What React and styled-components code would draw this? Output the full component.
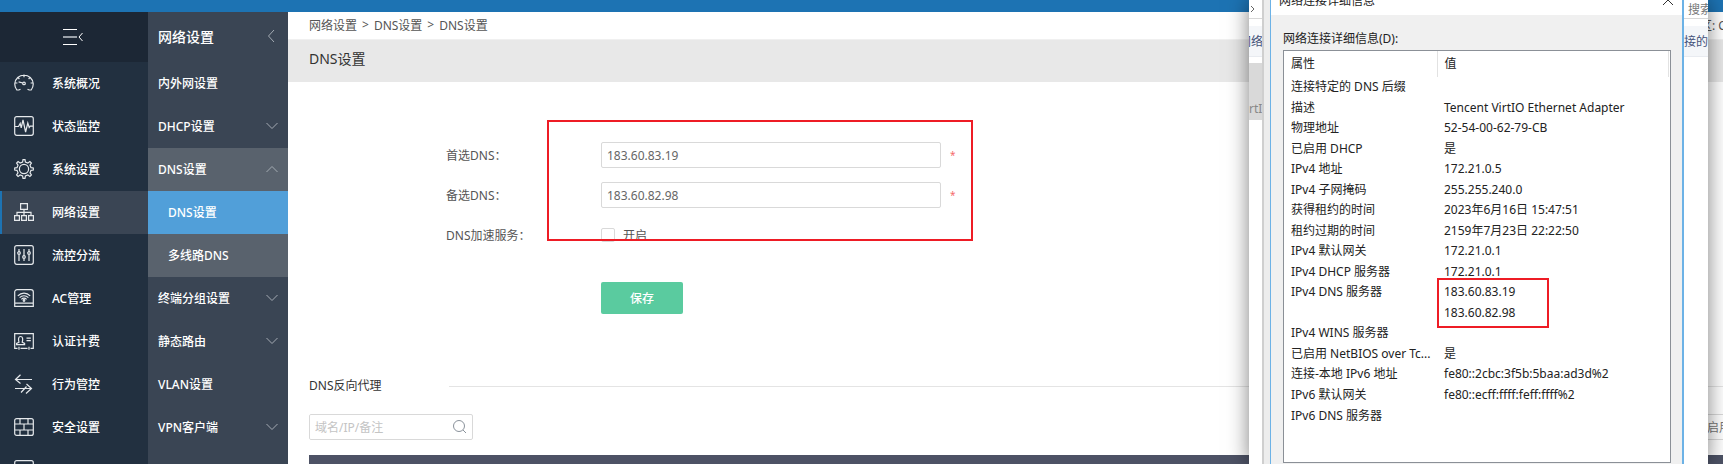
import React from "react";
import styled, { createGlobalStyle, css } from "styled-components";

const Global = createGlobalStyle`
  *, *::before, *::after { box-sizing: border-box; }
  body { margin: 0; background: #fff; overflow: hidden; }
  body, button, input { font-family: "Noto Sans", "Noto Sans CJK SC", sans-serif; font-size: 12px; }
`;

const Page = styled.div`
  position: relative;
  display: flex;
  flex-direction: column;
  height: 100vh;
  overflow: hidden;
  color: #555;
`;
const TopBar = styled.header`
  flex: none;
  height: 12px;
  background: #1d73b3;
`;
const Body = styled.div`
  flex: 1;
  display: flex;
  min-height: 0;
`;

/* Primary navigation */
const Sidebar = styled.nav`
  flex: none;
  width: 148px;
  overflow: hidden;
  background: #223040;
`;
const Collapse = styled.button`
  display: flex;
  align-items: center;
  justify-content: center;
  width: 100%;
  height: 50px;
  padding: 0 2px 0 0;
  border: 0;
  background: #1c2735;
`;
const NavItem = styled.a`
  display: flex;
  align-items: center;
  gap: 18px;
  height: 43px;
  padding: 0 0 2px 12px;
  border-left: 2px solid ${(p) => (p.$active ? "#1d73b3" : "transparent")};
  background: ${(p) => (p.$active ? "#3a4554" : "transparent")};
  color: #fff;
  font-weight: 500;
  text-decoration: none;
`;
const Icon = styled.svg`
  flex: none;
  width: 20px;
  height: 20px;
  fill: none;
  stroke: #e6e9ec;
  stroke-width: 1.2;
`;

/* Secondary navigation */
const SubNav = styled.nav`
  flex: none;
  width: 140px;
  overflow: hidden;
  background: #3a4554;
`;
const SubHeader = styled.div`
  display: flex;
  align-items: center;
  justify-content: space-between;
  height: 50px;
  padding: 0 13px 2px 10px;
  color: #fff;
  font-size: 14px;
  font-weight: 500;
`;
const SubItem = styled.a`
  display: flex;
  align-items: center;
  justify-content: space-between;
  height: 43px;
  padding: 0 10px 2px;
  color: #fff;
  font-weight: 500;
  text-decoration: none;
  ${(p) => p.$open && css`background: #59626d;`}
  ${(p) => p.$child && css`padding-left: 20px; background: #59626d;`}
  ${(p) => p.$active && css`background: #519fd9;`}
`;
const Chevron = styled.svg`
  flex: none;
  fill: none;
  stroke: #a4abb3;
`;

/* Content */
const Main = styled.main`
  flex: 1;
  min-width: 0;
  overflow: hidden;
`;
const Crumbs = styled.div`
  display: flex;
  align-items: center;
  justify-content: space-between;
  height: 28px;
  padding: 0 0 1px 21px;
  border-bottom: 1px solid #f0f0f0;
`;
const Trail = styled.nav`
  display: flex;
  gap: 5px;
  a { color: #555; text-decoration: none; }
`;
const Region = styled.div`
  width: 23px;
  overflow: hidden;
  white-space: nowrap;
`;
const Title = styled.h1`
  margin: 0;
  height: 42px;
  padding-left: 21px;
  background: #e8e8e8;
  color: #333;
  font-size: 14px;
  font-weight: 400;
  line-height: 38px;
`;
const Form = styled.form`
  position: relative;
  display: grid;
  gap: 14px;
  padding: 60px 0 0 158px;
`;
const Field = styled.div`
  display: grid;
  grid-template-columns: 155px 340px 1fr;
  align-items: center;
  height: 26px;
`;
const TextInput = styled.input`
  width: 100%;
  height: 26px;
  padding: 0 5px;
  border: 1px solid #d9d9d9;
  border-radius: 2px;
  background: #fff;
  color: #666;
  outline: 0;
  &::placeholder { color: #c4c4c4; opacity: 1; }
`;
const Required = styled.span`
  padding-left: 9px;
  color: #f56c6c;
  font-size: 10px;
`;
const CheckLabel = styled.label`
  display: flex;
  align-items: center;
  gap: 8px;
`;
const CheckBox = styled.input`
  appearance: none;
  width: 14px;
  height: 14px;
  margin: 0;
  border: 1px solid #d9d9d9;
  border-radius: 2px;
  background: #fff;
`;
const Save = styled.button`
  width: 82px;
  height: 32px;
  margin: 20px 0 0 155px;
  border: 0;
  border-radius: 2px;
  background: #5acb9f;
  color: #fff;
  font-weight: 500;
`;
const Highlight = styled.div`
  position: absolute;
  z-index: 2;
  border: 2px solid #ee1c25;
  pointer-events: none;
`;
const FormHighlight = styled(Highlight)`
  top: 38px;
  left: 259px;
  width: 426px;
  height: 121px;
`;
const SectionHead = styled.div`
  display: grid;
  grid-template-columns: 140px 1fr;
  align-items: center;
  margin-top: 62px;
  padding-left: 21px;
  &::after { content: ""; height: 1px; background: #e4e4e4; }
`;
const SectionTitle = styled.h2`
  margin: 0;
  color: #333;
  font-size: 12px;
  font-weight: 400;
  line-height: 20px;
`;
const Tools = styled.div`
  display: flex;
  justify-content: space-between;
  margin-top: 18px;
  padding-left: 21px;
`;
const Search = styled.label`
  display: flex;
  align-items: center;
  width: 164px;
  height: 26px;
  padding-right: 6px;
  border: 1px solid #d9d9d9;
  border-radius: 2px;
  ${TextInput} { height: 24px; border: 0; min-width: 0; }
`;
const ToolButton = styled.button`
  width: 28px;
  height: 26px;
  padding: 0 0 0 11px;
  overflow: hidden;
  border: 1px solid #d9d9d9;
  border-right: 0;
  background: #fff;
  color: #777;
  text-align: left;
  white-space: nowrap;
`;
const TableHead = styled.div`
  height: 42px;
  margin: 15px 0 0 21px;
  background: #4d5265;
`;

/* Desktop windows over the page */
const BackWindow = styled.section`
  position: absolute;
  z-index: 3;
  top: 0;
  right: 15px;
  bottom: 0;
  width: 459px;
  background: #fff;
  box-shadow: 0 0 20px rgba(0, 0, 0, 0.5);
`;
const BackRow = styled.div`
  display: flex;
  align-items: center;
  justify-content: space-between;
`;
const AddressRow = styled(BackRow)`
  height: 19px;
  padding-left: 1px;
  border-bottom: 1px solid #d8d8d8;
  color: #777;
`;
const CommandRow = styled(BackRow)`
  height: 31px;
  margin-top: 7px;
  border-bottom: 1px solid #e8ebf0;
  background: #f4f6f9;
  color: #44527a;
`;
const AdapterRow = styled(BackRow)`
  height: 57px;
  width: 13px;
  margin-top: 6px;
  padding-top: 34px;
  background: #d9d9d9;
  color: #888;
`;
const Clip = styled.span`
  display: flex;
  justify-content: ${(p) => (p.$end ? "flex-end" : "flex-start")};
  width: ${(p) => p.$width};
  overflow: hidden;
  white-space: nowrap;
`;
const Dialog = styled.section`
  position: absolute;
  z-index: 1;
  top: -15px;
  right: 24px;
  bottom: -30px;
  width: 414px;
  border: solid #6cb2e6;
  border-width: 1px 2px 1px 1px;
  background: #f0f0f0;
  color: #222;
`;
const Gutter = styled.div`
  position: absolute;
  top: 0;
  bottom: 0;
  left: 13px;
  width: 8px;
  border-left: 2px solid #cfcfcf;
  background: #ededed;
`;
const DialogTitle = styled.header`
  display: flex;
  align-items: center;
  justify-content: space-between;
  height: 29px;
  padding: 0 8px 2px;
  background: #fff;
`;
const CloseButton = styled.button`
  display: flex;
  padding: 0;
  border: 0;
  background: none;
`;
const ListCaption = styled.h2`
  margin: 14px 0 2px 12px;
  font-size: 12px;
  font-weight: 400;
  line-height: 19px;
`;
const ListBox = styled.div`
  height: 413px;
  margin: 0 11px 0 12px;
  padding-right: 1px;
  border: 1px solid #8b9097;
  background: #fff;
`;
const Details = styled.table`
  width: 100%;
  height: 375px;
  border-collapse: collapse;
  table-layout: fixed;
  th, td {
    padding: 0 0 0 7px;
    overflow: hidden;
    font-weight: 400;
    line-height: 18px;
    text-align: left;
    text-overflow: ellipsis;
    white-space: nowrap;
  }
  thead th { height: 26px; border-right: 1px solid #e2e2e2; }
  th:first-child { width: 153px; }
`;
const ListHighlight = styled(Highlight)`
  top: 292px;
  left: 166px;
  width: 112px;
  height: 50px;
`;

const icons = {
  gauge: (
    <>
      <path d="M6.500 16.200 4.800 17H2.800A9.200 9.200 0 1 1 17.200 17h-2l-1.700-.8M10 1.600v2.600M1.200 10h2.200M16.600 10h2.200M3.800 4.400l1.600 1.600M16.200 4.400 14.600 6M4.600 8.800l4.200 1.200" />
      <circle cx="10" cy="10.400" r="1.300" />
    </>
  ),
  pulse: (
    <>
      <rect x=".7" y=".7" width="18.600" height="18.600" rx="2" />
      <path d="M1 10.500h3.500L6.200 7.400l1 4.400L9 4l2.600 12 2.200-9 1.400 4.500 1-1.400H19" />
    </>
  ),
  gear: (
    <>
      <circle cx="10" cy="10" r="4.600" />
      <path d="M8.600 3 9 .7h2l.4 2.300 2.500 1 2-1.400 1.500 1.500L16 6.100l1 2.500 2.300.4v2l-2.300.4-1 2.500 1.400 2-1.500 1.500-2-1.400-2.500 1-.4 2.300H9L8.600 17l-2.500-1-2 1.400-1.500-1.500 1.400-2-1-2.500L.7 11V9L3 8.600l1-2.500-1.400-2 1.500-1.500 2 1.400z" />
    </>
  ),
  network: (
    <path d="M6.600 1.600h6.800v5.800H6.600zM.6 13.600h4.800v4.800H.6zM7.600 13.600h4.800v4.800H7.600zM14.600 13.600h4.800v4.800h-4.800zM10 7.400v6M3 13.400v-3h14v3" />
  ),
  sliders: (
    <>
      <rect x=".7" y=".7" width="18.600" height="18.600" rx="2" />
      <path d="M5 4v3M5 9.500V16M10 4v7M10 13.500V16M15 4v3M15 9.500V16" />
      <circle cx="5" cy="8" r="1.300" />
      <circle cx="10" cy="12" r="1.300" />
      <circle cx="15" cy="8" r="1.300" />
    </>
  ),
  wifi: (
    <>
      <path d="M.7 15V4a2.400 2.400 0 0 1 2.400-2.400h13.800A2.400 2.400 0 0 1 19.300 4v11M.7 15.200h18.600v3.200H.7z" />
      <path d="M3.800 7.800c3.600-3.600 8.800-3.600 12.400 0M5.600 9.600c2.500-2.500 6.300-2.500 8.800 0M7.400 11.300c1.500-1.500 3.700-1.500 5.200 0" />
      <circle cx="10" cy="12.500" r=".8" />
    </>
  ),
  card: (
    <>
      <path d="M3.500 17.400H.7V2.600h18.600v14.800h-2.800M6.500 17.400h7M5 15.800v3M15 15.800v3M12.500 7.200h4.300M12.500 9.600h4.300" />
      <path d="M5 11.200C4 8 4.500 5.500 6.600 5.500S9.200 8 8.200 11.200l2.400 1.200v1.200H2.600v-1.200z" />
    </>
  ),
  arrows: <path d="M18 5.500H1.500M6.500.700 1.500 5.500l5 4M1 14.500h16.500M7 18.500l5.500-6M12.500 10l5 4.500-5.500 5" />,
  wall: (
    <>
      <rect x=".7" y="1.600" width="18.600" height="16.800" rx="2" />
      <path d="M1 7h18M1 13h18M6 1.600V7M14 1.600V7M10 7v6M6 13v5.400M14 13v5.400" />
    </>
  ),
  panel: <rect x=".7" y=".7" width="18.600" height="18.600" rx="2" />,
};

const nav = [
  ["gauge", "系统概况"],
  ["pulse", "状态监控"],
  ["gear", "系统设置"],
  ["network", "网络设置"],
  ["sliders", "流控分流"],
  ["wifi", "AC管理"],
  ["card", "认证计费"],
  ["arrows", "行为管控"],
  ["wall", "安全设置"],
  ["panel", ""],
];

const subNav = [
  { text: "内外网设置" },
  { text: "DHCP设置", arrow: "down" },
  { text: "DNS设置", arrow: "up", open: true },
  { text: "DNS设置", child: true, active: true },
  { text: "多线路DNS", child: true },
  { text: "终端分组设置", arrow: "down" },
  { text: "静态路由", arrow: "down" },
  { text: "VLAN设置" },
  { text: "VPN客户端", arrow: "down" },
];

const details = [
  ["连接特定的 DNS 后缀", ""],
  ["描述", "Tencent VirtIO Ethernet Adapter"],
  ["物理地址", "52-54-00-62-79-CB"],
  ["已启用 DHCP", "是"],
  ["IPv4 地址", "172.21.0.5"],
  ["IPv4 子网掩码", "255.255.240.0"],
  ["获得租约的时间", "2023年6月16日 15:47:51"],
  ["租约过期的时间", "2159年7月23日 22:22:50"],
  ["IPv4 默认网关", "172.21.0.1"],
  ["IPv4 DHCP 服务器", "172.21.0.1"],
  ["IPv4 DNS 服务器", "183.60.83.19"],
  ["", "183.60.82.98"],
  ["IPv4 WINS 服务器", ""],
  ["已启用 NetBIOS over Tc...", "是"],
  ["连接-本地 IPv6 地址", "fe80::2cbc:3f5b:5baa:ad3d%2"],
  ["IPv6 默认网关", "fe80::ecff:ffff:feff:ffff%2"],
  ["IPv6 DNS 服务器", ""],
];

export default function App() {
  return (
    <Page>
      <Global />
      <TopBar />
      <Body>
        <Sidebar>
          <Collapse type="button" aria-label="收起菜单">
            <svg width="22" height="18" fill="none" stroke="#fff">
              <path d="M1 1.500h14M1 16.500h14" />
              <path d="M1 9h14" stroke="#9aa1a9" strokeWidth="2" />
              <path d="M20.500 5 17 9l3.500 4" />
            </svg>
          </Collapse>
          {nav.map(([icon, text]) => (
            <NavItem href="#" key={icon} $active={icon === "network"}>
              <Icon viewBox="0 0 20 20">{icons[icon]}</Icon>
              {text}
            </NavItem>
          ))}
        </Sidebar>
        <SubNav>
          <SubHeader>
            网络设置
            <Chevron width="8" height="14">
              <path d="M7 1 1.500 7 7 13" />
            </Chevron>
          </SubHeader>
          {subNav.map((item, i) => (
            <SubItem href="#" key={i} $open={item.open} $child={item.child} $active={item.active}>
              {item.text}
              {item.arrow && (
                <Chevron width="12" height="8">
                  <path d={item.arrow === "down" ? "M.5 1 6 6.500 11.500 1" : "M.5 7 6 1.500 11.500 7"} />
                </Chevron>
              )}
            </SubItem>
          ))}
        </SubNav>
        <Main>
          <Crumbs>
            <Trail>
              <a href="#">网络设置</a>
              <span>&gt;</span>
              <a href="#">DNS设置</a>
              <span>&gt;</span>
              <a href="#">DNS设置</a>
            </Trail>
            <Region>区: C</Region>
          </Crumbs>
          <Title>DNS设置</Title>
          <Form onSubmit={(e) => e.preventDefault()}>
            <Field>
              <label htmlFor="dns1">首选DNS：</label>
              <TextInput id="dns1" defaultValue="183.60.83.19" />
              <Required>*</Required>
            </Field>
            <Field>
              <label htmlFor="dns2">备选DNS：</label>
              <TextInput id="dns2" defaultValue="183.60.82.98" />
              <Required>*</Required>
            </Field>
            <Field>
              <span>DNS加速服务：</span>
              <CheckLabel>
                <CheckBox type="checkbox" />
                开启
              </CheckLabel>
            </Field>
            <Save type="submit">保存</Save>
            <FormHighlight />
          </Form>
          <SectionHead>
            <SectionTitle>DNS反向代理</SectionTitle>
          </SectionHead>
          <Tools>
            <Search>
              <TextInput placeholder="域名/IP/备注" aria-label="域名/IP/备注" />
              <svg width="16" height="16" fill="none" stroke="#8a929b">
                <circle cx="7" cy="7" r="5.500" />
                <path d="m11 11 4 4" />
              </svg>
            </Search>
            <ToolButton type="button">启用</ToolButton>
          </Tools>
          <TableHead />
        </Main>
      </Body>
      <BackWindow>
        <AddressRow>
          <svg width="6" height="8" fill="none" stroke="#666">
            <path d="m1 1 3 3-3 3" />
          </svg>
          <Clip $width="20px">搜索</Clip>
        </AddressRow>
        <CommandRow>
          <Clip $width="14px" $end>网络</Clip>
          <Clip $width="24px" $end>连接的</Clip>
        </CommandRow>
        <AdapterRow>
          <Clip $width="13px">rtIO</Clip>
        </AdapterRow>
        <Gutter />
        <Dialog>
          <DialogTitle>
            网络连接详细信息
            <CloseButton type="button" aria-label="关闭">
              <svg width="12" height="12" fill="none" stroke="#333">
                <path d="m1 1 10 10M11 1 1 11" />
              </svg>
            </CloseButton>
          </DialogTitle>
          <ListCaption>网络连接详细信息(D):</ListCaption>
          <ListBox>
            <Details>
              <thead>
                <tr>
                  <th>属性</th>
                  <th>值</th>
                </tr>
              </thead>
              <tbody>
                {details.map(([name, value], i) => (
                  <tr key={i}>
                    <td>{name}</td>
                    <td>{value}</td>
                  </tr>
                ))}
              </tbody>
            </Details>
          </ListBox>
          <ListHighlight />
        </Dialog>
      </BackWindow>
    </Page>
  );
}
